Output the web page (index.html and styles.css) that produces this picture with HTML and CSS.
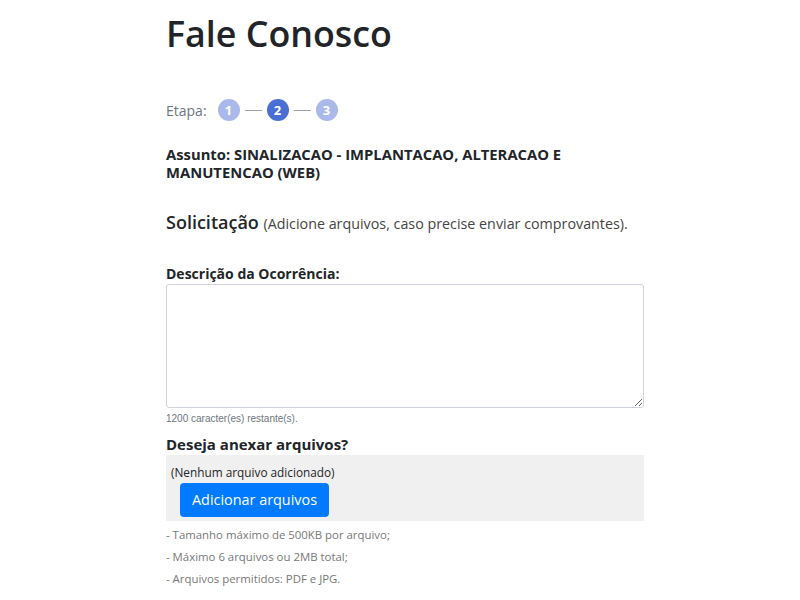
FILE: index.html
```html
<!DOCTYPE html>
<html lang="pt-BR">
<head>
<meta charset="utf-8">
<title>Fale Conosco</title>
<link rel="stylesheet" href="styles.css">
</head>
<body>
<main class="page">
  <h1 class="title">Fale Conosco</h1>

  <div class="steps">
    <span class="steps-label">Etapa:</span>
    <span class="step">1</span>
    <span class="step-line"></span>
    <span class="step step-active">2</span>
    <span class="step-line"></span>
    <span class="step">3</span>
  </div>

  <p class="subject">Assunto: SINALIZACAO - IMPLANTACAO, ALTERACAO E MANUTENCAO (WEB)</p>

  <h2 class="section">Solicitação <span class="section-note">(Adicione arquivos, caso precise enviar comprovantes).</span></h2>

  <label class="field-label" for="desc">Descrição da Ocorrência:</label>
  <textarea id="desc" class="textarea"></textarea>
  <div class="counter">1200 caracter(es) restante(s).</div>

  <div class="attach-title">Deseja anexar arquivos?</div>
  <div class="attach-box">
    <div class="attach-empty">(Nenhum arquivo adicionado)</div>
    <button class="btn-add" type="button">Adicionar arquivos</button>
  </div>

  <ul class="rules">
    <li>- Tamanho máximo de 500KB por arquivo;</li>
    <li>- Máximo 6 arquivos ou 2MB total;</li>
    <li>- Arquivos permitidos: PDF e JPG.</li>
  </ul>
</main>
</body>
</html>
```

FILE: styles.css
```css
* { box-sizing: border-box; }
html, body { margin: 0; padding: 0; background: #fff; }
body {
  font-family: "Open Sans", "Noto Sans", sans-serif;
  color: #212529;
}
.page {
  width: 478px;
  margin-left: 166px;
  display: flex;
  flex-direction: column;
}
.title {
  margin: 11px 0 0 0;
  font-size: 35.8px;
  font-weight: 600;
  line-height: 44px;
  color: #212529;
}
.steps {
  margin-top: 43px;
  display: flex;
  align-items: center;
  height: 24px;
}
.steps-label {
  font-size: 14px;
  color: #6c757d;
  margin-right: 11px;
}
.step {
  width: 22px;
  height: 22px;
  border-radius: 50%;
  background: #aab9e9;
  color: #fff;
  font-size: 13px;
  font-weight: 700;
  display: flex;
  align-items: center;
  justify-content: center;
}
.step-active { background: #4a6fd4; }
.step-line {
  width: 17px;
  height: 1px;
  background: #9aa0a6;
  margin: 0 5px;
}
.subject {
  margin: 23px 0 0 0;
  font-size: 14.8px;
  font-weight: 700;
  line-height: 18px;
  color: #212529;
}
.section {
  margin: 29px 0 0 0;
  font-size: 18px;
  font-weight: 600;
  line-height: 24px;
  color: #212529;
}
.section-note {
  font-size: 14.3px;
  font-weight: 400;
  color: #444;
}
.field-label {
  margin-top: 29px;
  font-size: 14px;
  font-weight: 700;
  line-height: 18px;
}
.textarea {
  margin-top: 1px;
  width: 478px;
  height: 124px;
  border: 1px solid #ced4da;
  border-radius: 3px;
  resize: vertical;
  font-family: inherit;
}
.counter {
  margin-top: 4px;
  font-family: "Liberation Sans", Arial, sans-serif;
  font-size: 10px;
  color: #6c757d;
  line-height: 14px;
}
.attach-title {
  margin-top: 8px;
  font-size: 15px;
  font-weight: 700;
  line-height: 20px;
}
.attach-box {
  margin-top: 1px;
  background: #f0f0f0;
  padding: 8px 5px 4px 5px;
  display: flex;
  flex-direction: column;
  align-items: flex-start;
}
.attach-empty {
  font-size: 11.8px;
  line-height: 18px;
  color: #212529;
}
.btn-add {
  margin: 2px 0 0 9px;
  background: #007bff;
  color: #fff;
  border: 0;
  border-radius: 4px;
  font-family: inherit;
  font-size: 14.4px;
  padding: 0 12px;
  height: 34px;
  line-height: 34px;
}
.rules {
  list-style: none;
  margin: 3px 0 0 0;
  padding: 0;
}
.rules li {
  font-size: 11.4px;
  line-height: 22px;
  color: #777;
}
```
